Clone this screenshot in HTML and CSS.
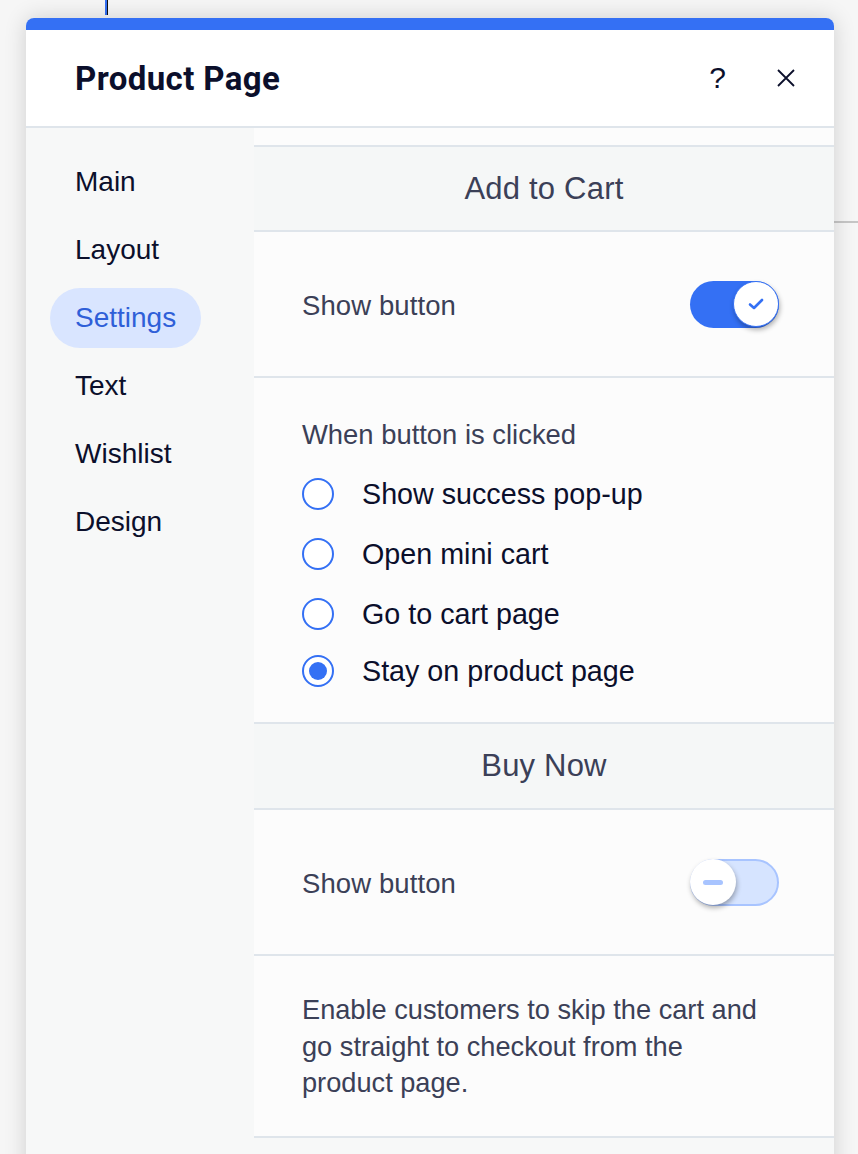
FILE: index.html
```html
<!DOCTYPE html>
<html lang="en">
<head>
<meta charset="utf-8">
<title>Product Page</title>
<link rel="stylesheet" href="styles.css">
</head>
<body>
<div class="canvas-mark"></div>
<div class="canvas-line"></div>
<div class="panel">
  <div class="topbar"></div>
  <header class="header">
    <h1 class="title">Product Page</h1>
    <div class="header-actions">
      <span class="help">?</span>
      <svg class="close" width="20" height="20" viewBox="0 0 20 20"><path d="M2 2 L18 18 M18 2 L2 18" stroke="#0b0f2b" stroke-width="1.8" fill="none"/></svg>
    </div>
  </header>
  <div class="body">
    <nav class="sidebar">
      <div class="nav-item">Main</div>
      <div class="nav-item">Layout</div>
      <div class="nav-item active">Settings</div>
      <div class="nav-item">Text</div>
      <div class="nav-item">Wishlist</div>
      <div class="nav-item">Design</div>
    </nav>
    <main class="content">
      <div class="strip"></div>
      <div class="section-head">Add to Cart</div>
      <div class="toggle-row">
        <span class="row-label">Show button</span>
        <span class="toggle on"><span class="knob"><svg width="18" height="14" viewBox="0 0 18 14"><path d="M3 7.5 L7 11 L15 3" stroke="#3470f4" stroke-width="2.6" fill="none" stroke-linecap="round" stroke-linejoin="round"/></svg></span></span>
      </div>
      <div class="radio-section">
        <div class="radio-title">When button is clicked</div>
        <div class="radio-list">
          <div class="radio-item"><span class="radio"></span><span>Show success pop-up</span></div>
          <div class="radio-item"><span class="radio"></span><span>Open mini cart</span></div>
          <div class="radio-item"><span class="radio"></span><span>Go to cart page</span></div>
          <div class="radio-item short"><span class="radio checked"></span><span>Stay on product page</span></div>
        </div>
      </div>
      <div class="section-head tall">Buy Now</div>
      <div class="toggle-row">
        <span class="row-label">Show button</span>
        <span class="toggle off"><span class="knob"><span class="minus"></span></span></span>
      </div>
      <div class="desc">Enable customers to skip the cart and go straight to checkout from the product page.</div>
      <div class="rest"></div>
    </main>
  </div>
</div>
</body>
</html>
```

FILE: styles.css
```css
html, body {
  margin: 0;
  padding: 0;
}
body {
  height: 1154px;
  overflow: hidden;
  background: #f6f6f6;
  font-family: "Liberation Sans", Arial, sans-serif;
  position: relative;
}
.canvas-mark {
  position: absolute;
  left: 105px;
  top: 0;
  width: 2px;
  height: 15px;
  background: #3470f4;
  border-right: 1px solid #111;
}
.canvas-line {
  position: absolute;
  left: 834px;
  top: 221px;
  width: 24px;
  height: 2px;
  background: #c6c6c6;
}
.panel {
  position: relative;
  margin: 18px 0 0 26px;
  width: 808px;
  height: 1160px;
  border-radius: 8px 8px 0 0;
  overflow: hidden;
  background: #f7f8f8;
  box-shadow: 0 0 22px rgba(0, 0, 0, 0.16);
  display: flex;
  flex-direction: column;
}
.topbar {
  height: 12px;
  background: #3470f4;
  flex: none;
}
.header {
  height: 96px;
  flex: none;
  background: #fff;
  border-bottom: 2px solid #dfe5eb;
  display: flex;
  align-items: center;
  justify-content: space-between;
  padding: 0 38px 0 49px;
}
.title {
  margin: 0;
  font-family: Roboto, "Liberation Sans", sans-serif;
  font-weight: 700;
  font-size: 33px;
  color: #0b0f2b;
  letter-spacing: 0.4px;
}
.header-actions {
  display: flex;
  align-items: center;
  gap: 50px;
}
.help {
  font-family: "Liberation Sans", sans-serif;
  font-size: 30px;
  color: #0b0f2b;
  font-weight: 400;
  line-height: 1;
}
.close {
  display: block;
}
.body {
  display: flex;
  flex: 1;
}
.sidebar {
  width: 228px;
  flex: none;
  background: #f7f8f8;
  padding: 24px 0 0 24px;
  box-sizing: border-box;
  display: flex;
  flex-direction: column;
  align-items: flex-start;
  gap: 8px;
}
.nav-item {
  height: 60px;
  line-height: 60px;
  padding: 0 25px;
  border-radius: 30px;
  font-size: 28px;
  color: #0b0f2b;
}
.nav-item.active {
  background: #d9e5ff;
  color: #2f5fd8;
}
.content {
  width: 580px;
  flex: none;
  background: #f7f8f8;
  display: flex;
  flex-direction: column;
}
.strip {
  height: 17px;
  background: #fcfcfc;
  border-bottom: 2px solid #dfe5eb;
}
.section-head {
  height: 83px;
  background: #f5f7f7;
  border-bottom: 2px solid #dfe5eb;
  display: flex;
  align-items: center;
  justify-content: center;
  font-size: 31px;
  color: #3b4057;
  letter-spacing: 0.2px;
}
.section-head.tall {
  height: 84px;
}
.toggle-row {
  height: 144px;
  background: #fcfcfc;
  border-bottom: 2px solid #dfe5eb;
  display: flex;
  align-items: center;
  justify-content: space-between;
  padding: 0 55px 0 48px;
}
.row-label {
  font-size: 27.5px;
  color: #3b4057;
  letter-spacing: 0.1px;
  padding-top: 3px;
}
.toggle {
  width: 89px;
  height: 47px;
  box-sizing: border-box;
  border-radius: 24px;
  position: relative;
  display: flex;
  align-items: center;
}
.toggle.on {
  background: #3470f4;
  justify-content: flex-end;
}
.toggle.off {
  background: #d6e4ff;
  border: 2px solid #a8c4ff;
  justify-content: flex-start;
}
.knob {
  width: 46px;
  height: 46px;
  border-radius: 50%;
  background: #fff;
  box-sizing: border-box;
  display: flex;
  align-items: center;
  justify-content: center;
  box-shadow: 1px 3px 5px rgba(0, 0, 0, 0.3);
}
.toggle.on .knob {
  border: 1px solid #3470f4;
}
.toggle.off .knob {
  margin-left: -2px;
}
.minus {
  width: 20px;
  height: 5px;
  border-radius: 3px;
  background: #a8c4ff;
}
.radio-section {
  height: 346px;
  box-sizing: border-box;
  background: #fcfcfc;
  border-bottom: 2px solid #dfe5eb;
  padding: 40px 0 0 48px;
}
.radio-title {
  font-size: 27.4px;
  line-height: 34px;
  color: #3b4057;
}
.radio-list {
  margin-top: 12px;
  display: flex;
  flex-direction: column;
}
.radio-item {
  height: 60px;
  display: flex;
  align-items: center;
  gap: 28px;
  font-size: 28.7px;
  color: #0b0f2b;
}
.radio-item.short {
  margin-top: -3px;
}
.radio {
  width: 32px;
  height: 32px;
  box-sizing: border-box;
  border-radius: 50%;
  border: 2px solid #3470f4;
  background: #fff;
  position: relative;
  flex: none;
}
.radio.checked::after {
  content: "";
  position: absolute;
  left: 5px;
  top: 5px;
  width: 18px;
  height: 18px;
  border-radius: 50%;
  background: #3470f4;
}
.desc {
  height: 182px;
  box-sizing: border-box;
  background: #fcfcfc;
  border-bottom: 2px solid #dfe5eb;
  padding: 36px 60px 0 48px;
  font-size: 27.2px;
  line-height: 36.5px;
  color: #3b4057;
}
.rest {
  flex: 1;
  background: #f7f8f8;
}
```
